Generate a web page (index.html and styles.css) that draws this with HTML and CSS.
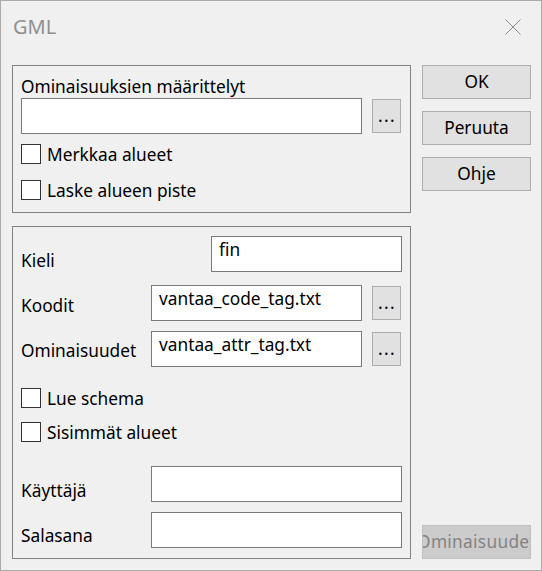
FILE: index.html
```html
<!DOCTYPE html>
<html lang="fi">
<head>
<meta charset="utf-8">
<title>GML</title>
<link rel="stylesheet" href="styles.css">
</head>
<body>
<div class="window">
  <div class="titlebar">
    <span class="title">GML</span>
    <svg class="close" width="16" height="16" viewBox="0 0 16 16"><path d="M0.5 0.5 L15.5 15.5 M15.5 0.5 L0.5 15.5" stroke="#8a8a8a" stroke-width="1" fill="none"/></svg>
  </div>
  <div class="main">
    <div class="left">
      <div class="group g1">
        <div class="caption">Ominaisuuksien määrittelyt</div>
        <div class="row">
          <div class="input w-wide"></div>
          <div class="btn dots">...</div>
        </div>
        <div class="check c1"><span class="box"></span><span class="clabel">Merkkaa alueet</span></div>
        <div class="check c2"><span class="box"></span><span class="clabel">Laske alueen piste</span></div>
      </div>
      <div class="group g2">
        <div class="row split r-kieli">
          <span class="label lb0">Kieli</span>
          <div class="input w-lang">fin</div>
        </div>
        <div class="row r-koodit">
          <span class="label lb4">Koodit</span>
          <div class="input w-file">vantaa_code_tag.txt</div>
          <div class="btn dots">...</div>
        </div>
        <div class="row r-omin">
          <span class="label lb5">Ominaisuudet</span>
          <div class="input w-file">vantaa_attr_tag.txt</div>
          <div class="btn dots">...</div>
        </div>
        <div class="check c3"><span class="box"></span><span class="clabel">Lue schema</span></div>
        <div class="check c4"><span class="box"></span><span class="clabel">Sisimmät alueet</span></div>
        <div class="row r-user">
          <span class="label lb0">Käyttäjä</span>
          <div class="input w-user"></div>
        </div>
        <div class="row r-pass">
          <span class="label lb1">Salasana</span>
          <div class="input w-user"></div>
        </div>
      </div>
    </div>
    <div class="right">
      <div class="btn cmd">OK</div>
      <div class="btn cmd">Peruuta</div>
      <div class="btn cmd">Ohje</div>
      <div class="btn cmd disabled"><span>Ominaisuudet</span></div>
    </div>
  </div>
</div>
</body>
</html>
```
FILE: styles.css
```css
* { box-sizing: border-box; }
html, body { margin: 0; padding: 0; }
body {
  font-family: "Noto Sans", "Open Sans", sans-serif;
  font-size: 17.3px;
  color: #000;
  background: #f0f0f0;
}
.window {
  width: 542px;
  height: 571px;
  border: 1px solid #aaaaaa;
  background: #f0f0f0;
  display: flex;
  flex-direction: column;
}
.titlebar {
  height: 64px;
  flex: none;
  display: flex;
  justify-content: space-between;
  align-items: flex-start;
  padding: 12px 20px 0 12px;
}
.title {
  font-size: 20px;
  line-height: 28px;
  color: #8f8f8f;
}
.close { margin-top: 6px; display: block; }
.main {
  display: flex;
  padding: 0 10px 0 11px;
  gap: 11px;
}
.left {
  width: 399px;
  display: flex;
  flex-direction: column;
  gap: 13px;
}
.right {
  width: 109px;
  display: flex;
  flex-direction: column;
  gap: 12px;
}
.group {
  border: 1px solid #828282;
  padding: 0 8px;
}
.g1 { height: 148px; padding-top: 10px; }
.g2 { height: 333px; padding-top: 9px; }
.caption { line-height: 22px; }
.row { display: flex; align-items: center; height: 36px; }
.split { justify-content: space-between; }
.label {
  width: 130px;
  line-height: 22px;
  align-self: flex-end;
}
.lb0 { margin-bottom: 0; }
.lb1 { margin-bottom: 1px; }
.lb4 { margin-bottom: 4px; }
.lb5 { margin-bottom: 5px; }
.input {
  height: 36px;
  background: #fff;
  border: 1px solid #7a7a7a;
  padding: 2px 7px;
  line-height: 22px;
  white-space: nowrap;
  overflow: hidden;
}
.w-wide { width: 341px; }
.w-lang { width: 191px; }
.w-file { width: 211px; }
.w-user { width: 251px; }
.btn {
  background: #e1e1e1;
  border: 1px solid #adadad;
  display: flex;
  align-items: center;
  justify-content: center;
  line-height: 22px;
  white-space: nowrap;
}
.dots {
  width: 29px;
  height: 34px;
  margin-left: 10px;
  letter-spacing: 1.4px;
  padding-left: 1px;
}
.cmd { height: 34px; }
.disabled {
  margin-top: auto;
  background: #cccccc;
  border-color: #bfbfbf;
  color: #838383;
  overflow: hidden;
}
.disabled span { flex: none; letter-spacing: 0.3px; }
.check {
  display: flex;
  align-items: flex-start;
  gap: 6px;
  height: 20px;
}
.box {
  width: 20px;
  height: 20px;
  flex: none;
  border: 1px solid #333333;
  background: #fff;
}
.clabel { line-height: 20px; padding-top: 1px; }
.c1 { margin-top: 10px; }
.c2 { margin-top: 16px; }
.r-koodit { margin-top: 13px; }
.r-omin { margin-top: 10px; }
.c3 { margin-top: 21px; }
.c4 { margin-top: 14px; }
.r-user { margin-top: 24px; }
.r-pass { margin-top: 10px; }
```
